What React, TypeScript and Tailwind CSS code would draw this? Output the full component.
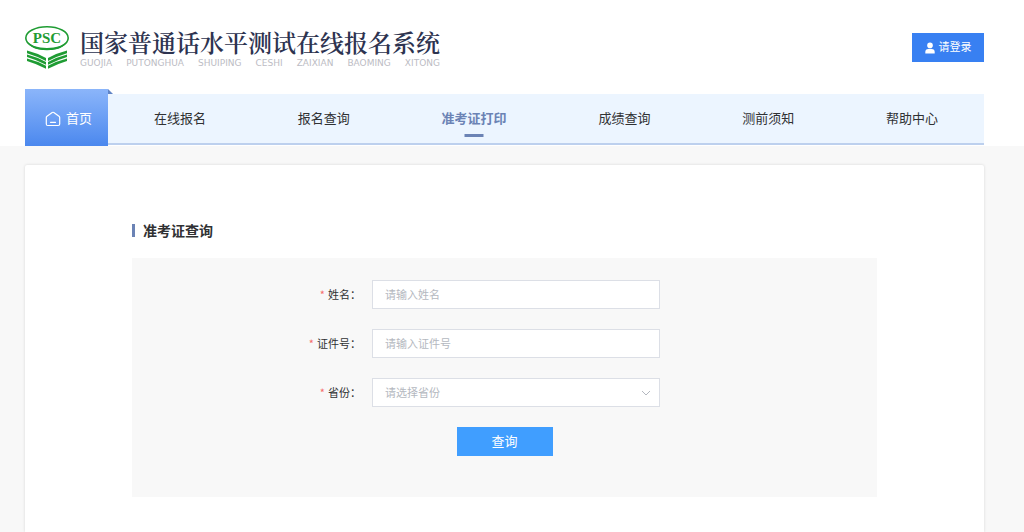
import React from "react";

const navItems = [
  { label: "在线报名" },
  { label: "报名查询" },
  { label: "准考证打印", active: true },
  { label: "成绩查询" },
  { label: "测前须知" },
  { label: "帮助中心" },
];

const romanizedWords = ["GUOJIA", "PUTONGHUA", "SHUIPING", "CESHI", "ZAIXIAN", "BAOMING", "XITONG"];

const controlClass =
  "block h-[29px] w-full border border-[#dcdfe6] bg-white px-3 text-[11px] text-[#606266] outline-none placeholder:text-[#b4b8c0] focus:border-[#409eff]";

function Logo() {
  return (
    <svg viewBox="0 0 46 44" className="h-11 w-[46px] shrink-0" role="img" aria-label="PSC">
      <ellipse cx="22" cy="13" rx="21.2" ry="11.2" fill="none" stroke="#1f9c33" strokeWidth="1.600" />
      <path d="M1.500 16 Q6 25.200 22 25.200 Q38 25.200 42.500 16 Q37 23 22 23 Q7 23 1.500 16Z" fill="#1f9c33" />
      <g fill="#1f9c33">
        <path d="M2 25.500Q12 28 21 33V36Q12 31.200 2 28.200Z" />
        <path d="M2 29.500Q12 32 21 37V39.800Q12 35 2 32Z" />
        <path d="M2 33.400Q12 35.800 21 40.800V43.700Q12 39 2 36Z" />
        <path d="M42 25.500Q32 28 23 33V36Q32 31.200 42 28.200Z" />
        <path d="M42 29.500Q32 32 23 37V39.800Q32 35 42 32Z" />
        <path d="M42 33.400Q32 35.800 23 40.800V43.700Q32 39 42 36Z" />
      </g>
      <text
        x="22"
        y="18"
        textAnchor="middle"
        fill="#1f9c33"
        className="font-['Liberation_Serif',serif] text-[15px] font-bold"
      >
        PSC
      </text>
    </svg>
  );
}

function Header() {
  return (
    <header className="flex items-start justify-between">
      <div className="flex items-center gap-[9px] pt-[25px]">
        <Logo />
        <div className="pt-[2px]">
          <h1 className="font-['Noto_Serif_CJK_SC','Noto_Sans_CJK_SC',serif] text-2xl leading-[26px] font-semibold whitespace-nowrap text-[#2d3350]">
            国家普通话水平测试在线报名系统
          </h1>
          <p className="mt-[3px] flex justify-between font-['DejaVu_Sans',sans-serif] text-[9px] leading-[10px] whitespace-nowrap text-[#bcbcc4]">
            {romanizedWords.map((word) => (
              <span key={word}>{word}</span>
            ))}
          </p>
        </div>
      </div>
      <button
        type="button"
        className="mt-[33px] flex h-[29px] w-[72px] items-center justify-center gap-[3px] bg-[#3880f2] pr-px text-[11px] text-white"
      >
        <svg viewBox="0 0 12 12" className="size-3" fill="currentColor" aria-hidden="true">
          <circle cx="6" cy="3.400" r="2.800" />
          <path d="M1.300 11.500V10q0-3 3-3h3.400q3 0 3 3v1.500z" />
        </svg>
        请登录
      </button>
    </header>
  );
}

function Navigation() {
  return (
    <nav className="mt-5 flex items-end">
      <a
        href="#"
        className="relative flex h-[57px] w-[83px] items-center justify-center gap-[5px] bg-linear-to-b from-[#8bb5fa] to-[#4b88ee] pt-[3px] pl-1 text-[13px] text-white"
      >
        <svg
          viewBox="0 0 16 16"
          className="size-4"
          fill="none"
          stroke="currentColor"
          strokeWidth="1.200"
          strokeLinejoin="round"
          strokeLinecap="round"
          aria-hidden="true"
        >
          <path d="M1.300 6.500Q1.300 5.700 2 5.200L7.200 1.500Q8 1 8.800 1.500L14 5.200Q14.700 5.700 14.700 6.500V13Q14.700 14.500 13.200 14.500H2.800Q1.300 14.500 1.300 13Z" />
          <path d="M5.500 11.300h5" />
        </svg>
        首页
        <svg viewBox="0 0 5 5" className="absolute top-0 left-full size-[5px]" aria-hidden="true">
          <path d="M0 0L5 5H0Z" fill="#6084c6" />
        </svg>
      </a>
      <ul className="mb-px flex h-[51px] flex-1 items-stretch justify-around border-b-2 border-[#bdd0ee] bg-[#ecf5ff]">
        {navItems.map((item) => (
          <li key={item.label} className="flex">
            <a
              href="#"
              aria-current={item.active ? "page" : undefined}
              className={
                item.active
                  ? "relative flex items-center text-[13px] font-bold text-[#6b83b5]"
                  : "flex items-center text-[13px] text-[#303133]"
              }
            >
              {item.label}
              {item.active && (
                <span className="absolute bottom-[6px] left-1/2 h-[3px] w-[19px] -translate-x-1/2 bg-[#6b83b5]" />
              )}
            </a>
          </li>
        ))}
      </ul>
    </nav>
  );
}

function Field({ id, label, children }: { id: string; label: string; children: React.ReactNode }) {
  return (
    <div className="flex justify-center pr-[97px]">
      <label htmlFor={id} className="flex h-[29px] w-[120px] items-center justify-end pr-[11px] text-[11px] text-[#303133]">
        <span className="mr-[3px] text-[#f56c6c]">*</span>
        {label}：
      </label>
      <div className="relative w-[288px]">{children}</div>
    </div>
  );
}

export default function App() {
  return (
    <div className="flex min-h-screen flex-col bg-[#f8f8f8] font-['Noto_Sans_CJK_SC',sans-serif]">
      <div className="bg-white pr-10 pl-[25px] font-['Liberation_Sans','Noto_Sans_CJK_SC',sans-serif]">
        <Header />
        <Navigation />
      </div>
      <main className="flex flex-1 flex-col pt-[19px] pr-10 pl-[25px]">
        <section className="flex-1 rounded-t-xs bg-white px-[107px] pt-[55px] pb-8 shadow-[0_0_3px_rgba(0,0,0,0.14)]">
          <h2 className="flex h-5 items-center gap-2 text-sm font-bold text-[#303133]">
            <span className="h-[13px] w-[3px] bg-[#6b83b5]" />
            准考证查询
          </h2>
          <form
            className="mt-[18px] flex flex-col gap-5 bg-[#f8f8f8] pt-[22px] pb-[41px]"
            onSubmit={(event) => event.preventDefault()}
          >
            <Field id="name" label="姓名">
              <input id="name" type="text" placeholder="请输入姓名" className={`${controlClass} pb-[2px]`} />
            </Field>
            <Field id="card" label="证件号">
              <input id="card" type="text" placeholder="请输入证件号" className={`${controlClass} pb-[2px]`} />
            </Field>
            <Field id="province" label="省份">
              <select id="province" defaultValue="" className={`${controlClass} appearance-none text-[#b4b8c0]`}>
                <option value="">请选择省份</option>
              </select>
              <svg
                viewBox="0 0 10 10"
                className="pointer-events-none absolute top-[10px] right-[9px] size-[10px]"
                fill="none"
                stroke="#b4b8c0"
                aria-hidden="true"
              >
                <path d="M1 3l4 4 4-4" />
              </svg>
            </Field>
            <button type="submit" className="h-[29px] w-24 self-center bg-[#409eff] pb-[2px] text-[13px] text-white">
              查询
            </button>
          </form>
        </section>
      </main>
    </div>
  );
}
